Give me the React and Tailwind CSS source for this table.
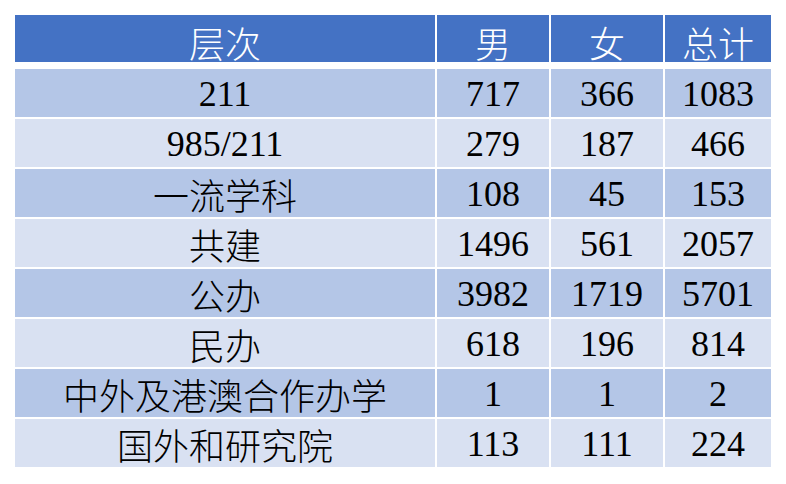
const rows = [
  ["211", "717", "366", "1083"],
  ["985/211", "279", "187", "466"],
  ["一流学科", "108", "45", "153"],
  ["共建", "1496", "561", "2057"],
  ["公办", "3982", "1719", "5701"],
  ["民办", "618", "196", "814"],
  ["中外及港澳合作办学", "1", "1", "2"],
  ["国外和研究院", "113", "111", "224"],
];

const isCjk = (s) => /[\u4e00-\u9fff]/.test(s);

function Cell({ children, className = "" }) {
  const cjk = isCjk(children);
  return (
    <div className={`flex items-center justify-center leading-none ${className}`}>
      {cjk ? (
        <span className="font-['Noto_Sans_CJK_SC',sans-serif] font-light">{children}</span>
      ) : (
        <span className="font-['Liberation_Serif',serif] font-normal">{children}</span>
      )}
    </div>
  );
}

export default function App() {
  return (
    <div className="h-[484px] w-[786px] bg-white pl-[15px] pt-[15px] text-[36px] text-black">
      <div className="grid h-[47px] grid-cols-[420px_112px_112px_106px] gap-x-[2px]">
        <Cell className="bg-[#4472c4] pt-[6px] text-white">层次</Cell>
        <Cell className="bg-[#4472c4] pt-[6px] text-white">男</Cell>
        <Cell className="bg-[#4472c4] pt-[6px] text-white">女</Cell>
        <Cell className="bg-[#4472c4] pt-[6px] text-white">总计</Cell>
      </div>
      <div className="mt-[7px] flex flex-col gap-y-[2px]">
        {rows.map((r, i) => {
          const bg = i % 2 === 0 ? "bg-[#b4c6e7]" : "bg-[#d9e1f2]";
          return (
            <div key={r[0]} className="grid h-[48px] grid-cols-[420px_112px_112px_106px] gap-x-[2px]">
              {r.map((v, j) => (
                <Cell key={j} className={`${bg} pt-[2px]`}>
                  {v}
                </Cell>
              ))}
            </div>
          );
        })}
      </div>
    </div>
  );
}
